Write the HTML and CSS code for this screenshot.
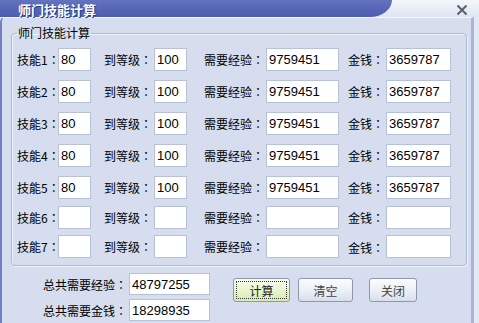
FILE: index.html
```html
<!DOCTYPE html>
<html>

<head>
    <meta charset="utf-8">
    <title>师门技能计算</title>
    <link rel="stylesheet" href="styles.css">
</head>

<body>
    <div class="window">
        <div class="titlebar">
            <div class="caption">师门技能计算</div>
            <div class="close">
                <svg width="12" height="12" viewBox="0 0 12 12">
                    <path d="M1.5 1.5 L10.5 10.5 M10.5 1.5 L1.5 10.5" stroke="#5a6070" stroke-width="2" fill="none"/>
                </svg>
            </div>
        </div>
        <div class="panel">
            <fieldset class="group">
                <legend>师门技能计算</legend>
                <div class="grid">
                    <label>技能1：</label><input class="short" value="80">
                    <label>到等级：</label><input class="short" value="100">
                    <label>需要经验：</label><input class="mid" value="9759451">
                    <label>金钱：</label><input class="money" value="3659787">

                    <label>技能2：</label><input class="short" value="80">
                    <label>到等级：</label><input class="short" value="100">
                    <label>需要经验：</label><input class="mid" value="9759451">
                    <label>金钱：</label><input class="money" value="3659787">

                    <label>技能3：</label><input class="short" value="80">
                    <label>到等级：</label><input class="short" value="100">
                    <label>需要经验：</label><input class="mid" value="9759451">
                    <label>金钱：</label><input class="money" value="3659787">

                    <label>技能4：</label><input class="short" value="80">
                    <label>到等级：</label><input class="short" value="100">
                    <label>需要经验：</label><input class="mid" value="9759451">
                    <label>金钱：</label><input class="money" value="3659787">

                    <label>技能5：</label><input class="short" value="80">
                    <label>到等级：</label><input class="short" value="100">
                    <label>需要经验：</label><input class="mid" value="9759451">
                    <label>金钱：</label><input class="money" value="3659787">

                    <label>技能6：</label><input class="short" value="">
                    <label>到等级：</label><input class="short" value="">
                    <label>需要经验：</label><input class="mid" value="">
                    <label>金钱：</label><input class="money" value="">

                    <label>技能7：</label><input class="short" value="">
                    <label>到等级：</label><input class="short" value="">
                    <label>需要经验：</label><input class="mid" value="">
                    <label class="low">金钱：</label><input class="money" value="">
                </div>
            </fieldset>
            <div class="footer">
                <div class="totals">
                    <label>总共需要经验：</label><input class="total" value="48797255">
                    <label>总共需要金钱：</label><input class="total" value="18298935">
                </div>
                <div class="buttons">
                    <button class="btn calc"><span>计算</span></button>
                    <button class="btn clear">清空</button>
                    <button class="btn shut">关闭</button>
                </div>
            </div>
        </div>
    </div>
</body>

</html>
```

FILE: styles.css
```css
html,
body {
    margin: 0;
    padding: 0;
    background: #e9eef8;
}

* {
    box-sizing: border-box;
}

.window {
    width: 479px;
    height: 323px;
    background: #e3e9f4;
    font-family: "Noto Sans CJK SC", "Liberation Sans", sans-serif;
    font-size: 12px;
    color: #000;
    overflow: hidden;
}

.titlebar {
    height: 17px;
    display: flex;
    justify-content: space-between;
    background: linear-gradient(#f4f6fb, #dfe5f1);
}

.caption {
    height: 17px;
    width: 392px;
    padding-left: 18px;
    padding-top: 1px;
    color: #fff;
    font-weight: bold;
    font-size: 13px;
    line-height: 17px;
    text-shadow: 1px 1px 0 #2e3a80;
    background: linear-gradient(#6373c0, #4c5caf);
    border-bottom-right-radius: 22px 17px;
}

.close {
    width: 12px;
    height: 12px;
    margin-right: 11px;
    margin-top: 4px;
}

.close svg {
    display: block;
}

.panel {
    height: 306px;
    margin-right: 5px;
    background: #d5ddef;
    border-left: 2px solid #7282c0;
    border-right: 3px solid #a9b5d2;
    border-top-left-radius: 5px;
    border-top: 1px solid #f4f6fb;
    padding-top: 8px;
}

.group {
    margin: 0 0 0 9px;
    width: 456px;
    height: 240px;
    border: 1px solid #aeb9d2;
    border-radius: 4px;
    padding: 10px 5px 0 5px;
    box-shadow: 1px 1px 0 #eef2fa inset, 1px 1px 0 #eef2fa;
}

.group legend {
    padding: 0 1px;
    margin-left: 0;
    line-height: 14px;
}

.grid {
    display: grid;
    grid-template-columns: 41px 33px 63px 33px 79px 73px 47px 65px;
    grid-template-rows: 32px 32px 32px 32px 30px 29px 23px;
    margin-top: -2px;
}

.grid label,
.totals label {
    height: 23px;
    line-height: 23px;
    text-align: right;
    padding-right: 2px;
    white-space: nowrap;
    font-family: "Noto Sans CJK TC", "Noto Sans CJK SC", sans-serif;
}

.grid label.low {
    line-height: 26px;
}

input {
    height: 23px;
    border: 1px solid #b7c2d6;
    background: #fff;
    font-family: "Liberation Sans", sans-serif;
    font-size: 13px;
    padding: 0 2px;
    margin: 0;
    color: #000;
}

.footer {
    display: flex;
    align-items: flex-start;
    margin-top: 7px;
}

.totals {
    display: grid;
    grid-template-columns: 88px 81px;
    row-gap: 3px;
    margin-left: 39px;
}

.totals input {
    height: 22px;
}

.buttons {
    display: flex;
    margin-left: 23px;
    margin-top: 5px;
}

.btn {
    height: 24px;
    border: 1px solid #8d98ae;
    border-radius: 3px;
    background: linear-gradient(#fbfcfe, #e9edf5 60%, #d9dfea);
    font-family: "Noto Sans CJK SC", sans-serif;
    font-size: 12px;
    color: #222;
    padding: 0;
}

.calc {
    width: 57px;
    background: linear-gradient(#fbfdf1, #e7f3c9 60%, #d7eab0);
    padding: 2px;
}

.calc span {
    display: block;
    height: 100%;
    line-height: 17px;
    border: 1px dotted #333;
}

.clear {
    width: 55px;
    margin-left: 8px;
    color: #444;
}

.shut {
    width: 48px;
    margin-left: 16px;
    color: #444;
}
```
